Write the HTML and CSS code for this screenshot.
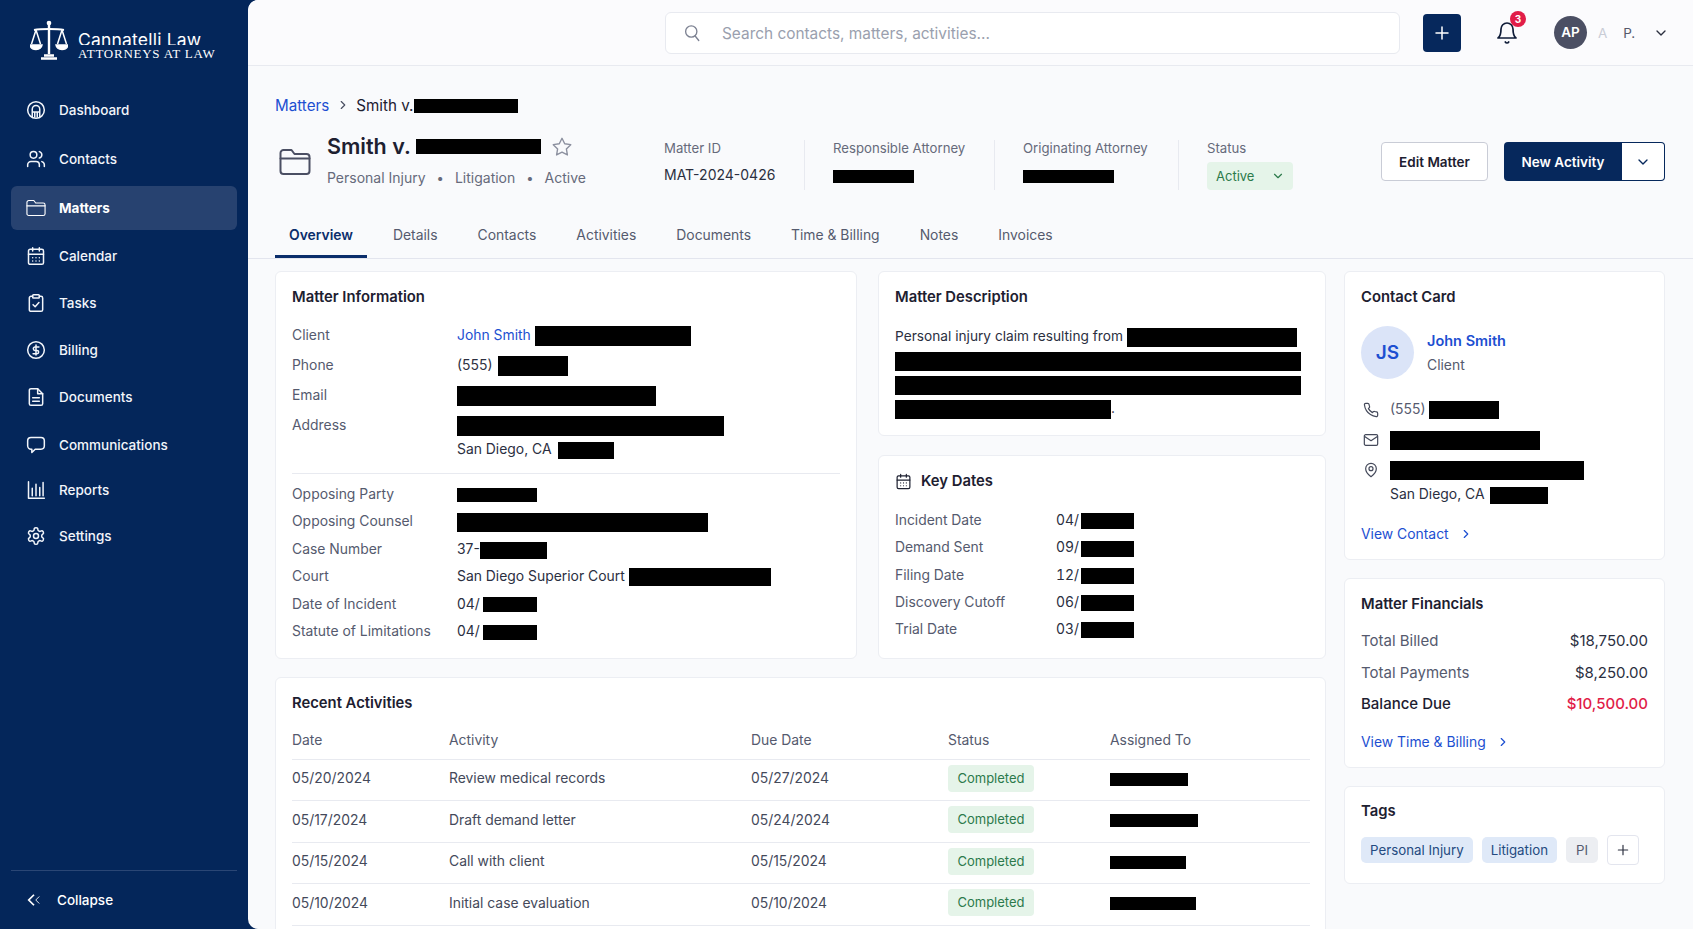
FILE: index.html
```html
<!DOCTYPE html>
<html lang="en">
<head>
    <meta charset="UTF-8">
    <meta name="viewport" content="width=device-width, initial-scale=1.0">
    <title>Smith v. - Matter Overview</title>
    <link rel="stylesheet" href="styles.css">
</head>
<body>
    <svg class="sprite" xmlns="http://www.w3.org/2000/svg">
        <symbol id="i-home" viewBox="0 0 24 24"><circle cx="12" cy="12" r="10"/><path d="M7.5 20.5V11a4.5 4.5 0 0 1 9 0v9.5M7.5 14.5h9M10.5 14.5v6M13.5 14.5v6"/></symbol>
        <symbol id="i-users" viewBox="0 0 24 24"><path d="M16 21v-2a4 4 0 0 0-4-4H6a4 4 0 0 0-4 4v2"/><circle cx="9" cy="7" r="4"/><path d="M22 21v-2a4 4 0 0 0-3-3.87M16 3.13a4 4 0 0 1 0 7.75"/></symbol>
        <symbol id="i-folder" viewBox="0 0 32 28"><path d="M1.5 9V5a3 3 0 0 1 3-3h8l3 4h12a3 3 0 0 1 3 3v14a3 3 0 0 1-3 3h-23a3 3 0 0 1-3-3V9z"/><path d="M1.500 10.500h29"/></symbol>
        <symbol id="i-calendar" viewBox="0 0 24 24"><rect x="3" y="4" width="18" height="18" rx="2"/><path d="M16 2v4M8 2v4M3 10h18M8 14h.01M12 14h.01M16 14h.01M8 18h.01M12 18h.01M16 18h.01"/></symbol>
        <symbol id="i-tasks" viewBox="0 0 24 24"><rect x="8" y="2" width="8" height="4" rx="1"/><path d="M16 4h2a2 2 0 0 1 2 2v14a2 2 0 0 1-2 2H6a2 2 0 0 1-2-2V6a2 2 0 0 1 2-2h2M8.5 14l2.5 2.5 4.5-5"/></symbol>
        <symbol id="i-dollar" viewBox="0 0 24 24"><circle cx="12" cy="12" r="10"/><path d="M15.5 8.5h-4.700a2 2 0 0 0 0 4h2.400a2 2 0 0 1 0 4H8.500M12 6v12"/></symbol>
        <symbol id="i-file" viewBox="0 0 24 24"><path d="M14 2H6a2 2 0 0 0-2 2v16a2 2 0 0 0 2 2h12a2 2 0 0 0 2-2V8z"/><path d="M14 2v6h6M8 13h8M8 17h8"/></symbol>
        <symbol id="i-chat" viewBox="0 0 24 24"><path d="M6 3h12a4 4 0 0 1 4 4v6a4 4 0 0 1-4 4h-7l-4 4v-4H6a4 4 0 0 1-4-4V7a4 4 0 0 1 4-4z"/></symbol>
        <symbol id="i-chart" viewBox="0 0 24 24"><path d="M3 2v20h19M7.5 10v9M12 5v14M16.5 9v10M20.5 3v16"/></symbol>
        <symbol id="i-gear" viewBox="0 0 24 24"><path d="M12.22 2h-.44a2 2 0 0 0-2 2v.18a2 2 0 0 1-1 1.73l-.43.25a2 2 0 0 1-2 0l-.15-.08a2 2 0 0 0-2.73.73l-.22.38a2 2 0 0 0 .73 2.73l.15.1a2 2 0 0 1 1 1.72v.51a2 2 0 0 1-1 1.74l-.15.09a2 2 0 0 0-.73 2.73l.22.38a2 2 0 0 0 2.73.73l.15-.08a2 2 0 0 1 2 0l.43.25a2 2 0 0 1 1 1.73V20a2 2 0 0 0 2 2h.44a2 2 0 0 0 2-2v-.18a2 2 0 0 1 1-1.73l.43-.25a2 2 0 0 1 2 0l.15.08a2 2 0 0 0 2.73-.73l.22-.39a2 2 0 0 0-.73-2.73l-.15-.08a2 2 0 0 1-1-1.74v-.5a2 2 0 0 1 1-1.74l.15-.09a2 2 0 0 0 .73-2.73l-.22-.38a2 2 0 0 0-2.73-.73l-.15.08a2 2 0 0 1-2 0l-.43-.25a2 2 0 0 1-1-1.73V4a2 2 0 0 0-2-2z"/><circle cx="12" cy="12" r="3"/></symbol>
        <symbol id="i-search" viewBox="0 0 24 24"><circle cx="11" cy="10" r="7.5"/><path d="M21 22l-4.800-6"/></symbol>
        <symbol id="i-bell" viewBox="0 0 24 24"><path d="M6 8a6 6 0 0 1 12 0c0 7 3 9 3 9H3s3-2 3-9"/><path d="M10.3 21a1.94 1.94 0 0 0 3.400 0"/></symbol>
        <symbol id="i-down" viewBox="0 0 24 24"><path d="M6 9l6 6 6-6"/></symbol>
        <symbol id="i-right" viewBox="0 0 24 24"><path d="M9 6l6 6-6 6"/></symbol>
        <symbol id="i-star" viewBox="0 0 24 24"><path d="M12 2.500l2.950 6 6.600.95-4.780 4.650 1.130 6.570L12 17.570 6.100 20.670l1.130-6.570L2.450 9.450l6.600-.95z"/></symbol>
        <symbol id="i-phone" viewBox="0 0 24 24"><path d="M22 16.92v3a2 2 0 0 1-2.180 2 19.79 19.79 0 0 1-8.630-3.070 19.5 19.5 0 0 1-6-6 19.79 19.79 0 0 1-3.070-8.670A2 2 0 0 1 4.110 2h3a2 2 0 0 1 2 1.720 12.84 12.84 0 0 0 .7 2.810 2 2 0 0 1-.45 2.110L8.090 9.910a16 16 0 0 0 6 6l1.270-1.270a2 2 0 0 1 2.110-.45 12.84 12.84 0 0 0 2.810.7A2 2 0 0 1 22 16.92z"/></symbol>
        <symbol id="i-mail" viewBox="0 0 24 24"><rect x="2" y="4" width="20" height="16" rx="2"/><path d="M3 7l9 6 9-6"/></symbol>
        <symbol id="i-pin" viewBox="0 0 24 24"><path d="M20 10c0 6-8 12-8 12s-8-6-8-12a8 8 0 0 1 16 0z"/><circle cx="12" cy="10" r="3"/></symbol>
        <symbol id="i-plus" viewBox="0 0 24 24"><path d="M12 4v16M4 12h16"/></symbol>
    </svg>

    <div class="app">
        <aside class="sidebar">
            <div class="logo">
                <svg class="logo-mark" viewBox="0 0 38 40" fill="none" stroke="#fff" stroke-width="1.5">
                    <circle cx="19" cy="3" r="1.6" fill="#fff"/>
                    <path d="M19 4v30" stroke-width="2.4"/>
                    <path d="M4 10c5-1 10-1 15-1s10 0 15 1" stroke-width="1.8"/>
                    <path d="M6 10L1.500 24M6 10l4.500 14M32 10l-4.500 14M32 10l4.500 14"/>
                    <path d="M0 25h12c-.5 3-3 4.500-6 4.500S.5 28 0 25zM26 25h12c-.5 3-3 4.500-6 4.500S26.500 28 26 25z" fill="#fff"/>
                    <path d="M11 38.5h16M14 35.5h10" stroke-width="2.4"/>
                </svg>
                <div class="logo-text">
                    <div class="logo-name"><span>Cannatelli Law</span></div>
                    <div class="logo-sub">ATTORNEYS AT LAW</div>
                </div>
            </div>
            <nav class="nav">
                <a class="nav-item"><svg class="icon"><use href="#i-home"/></svg>Dashboard</a>
                <a class="nav-item"><svg class="icon"><use href="#i-users"/></svg>Contacts</a>
                <a class="nav-item active"><svg class="icon"><use href="#i-folder"/></svg>Matters</a>
                <a class="nav-item"><svg class="icon"><use href="#i-calendar"/></svg>Calendar</a>
                <a class="nav-item"><svg class="icon"><use href="#i-tasks"/></svg>Tasks</a>
                <a class="nav-item"><svg class="icon"><use href="#i-dollar"/></svg>Billing</a>
                <a class="nav-item"><svg class="icon"><use href="#i-file"/></svg>Documents</a>
                <a class="nav-item"><svg class="icon"><use href="#i-chat"/></svg>Communications</a>
                <a class="nav-item"><svg class="icon"><use href="#i-chart"/></svg>Reports</a>
                <a class="nav-item"><svg class="icon"><use href="#i-gear"/></svg>Settings</a>
            </nav>
            <div class="collapse">
                <svg class="collapse-icon" viewBox="0 0 16 16" fill="none" stroke="#fff"><path d="M8 2L2 8l6 6" stroke-width="2"/><path d="M14 4l-4 4 4 4" stroke-width="1"/></svg>
                Collapse
            </div>
        </aside>

        <main class="main">
            <header class="topbar">
                <div class="search">
                    <svg class="icon icon-search"><use href="#i-search"/></svg>
                    <span>Search contacts, matters, activities...</span>
                </div>
                <button class="add-btn"><svg class="icon"><use href="#i-plus"/></svg></button>
                <div class="bell">
                    <svg class="icon"><use href="#i-bell"/></svg>
                    <span class="bell-count">3</span>
                </div>
                <div class="user">
                    <span class="avatar">AP</span>
                    <span class="user-name"><span class="faint">A</span> P.</span>
                    <svg class="icon icon-chevron"><use href="#i-down"/></svg>
                </div>
            </header>

            <section class="page-head">
                <div class="breadcrumb">
                    <a class="link">Matters</a>
                    <svg class="icon icon-sep"><use href="#i-right"/></svg>
                    <span>Smith v.<i class="redact w-104 h-14"></i></span>
                </div>
                <div class="matter-head">
                    <div class="matter-title-block">
                        <svg class="icon icon-folder"><use href="#i-folder"/></svg>
                        <div>
                            <h1>Smith v. <i class="redact w-125 h-15"></i><svg class="icon icon-star"><use href="#i-star"/></svg></h1>
                            <div class="matter-sub">Personal Injury<b>•</b>Litigation<b>•</b>Active</div>
                        </div>
                    </div>
                    <div class="meta meta-id"><span class="meta-label">Matter ID</span><span class="meta-value">MAT-2024-0426</span></div>
                    <div class="meta meta-resp"><span class="meta-label">Responsible Attorney</span><span class="meta-value"><i class="redact w-81 h-13"></i></span></div>
                    <div class="meta meta-orig"><span class="meta-label">Originating Attorney</span><span class="meta-value"><i class="redact w-91 h-13"></i></span></div>
                    <div class="meta meta-status"><span class="meta-label">Status</span><span class="status-pill">Active<svg class="icon"><use href="#i-down"/></svg></span></div>
                    <div class="actions">
                        <button class="btn-outline">Edit Matter</button>
                        <div class="btn-split">
                            <button class="btn-primary">New Activity</button>
                            <button class="btn-caret"><svg class="icon"><use href="#i-down"/></svg></button>
                        </div>
                    </div>
                </div>
            </section>

            <nav class="tabs">
                <a class="tab active">Overview</a>
                <a class="tab">Details</a>
                <a class="tab">Contacts</a>
                <a class="tab">Activities</a>
                <a class="tab">Documents</a>
                <a class="tab">Time &amp; Billing</a>
                <a class="tab">Notes</a>
                <a class="tab">Invoices</a>
            </nav>

            <div class="overview">
                <div class="overview-left">
                    <section class="card card-info">
                        <h2>Matter Information</h2>
                        <div class="info-row"><span>Client</span><div><a class="link">John Smith</a> <i class="redact w-156 h-20"></i></div></div>
                        <div class="info-row"><span>Phone</span><div>(555) <i class="redact ml-2 w-70 h-20"></i></div></div>
                        <div class="info-row"><span>Email</span><div><i class="redact w-199 h-20"></i></div></div>
                        <div class="info-row info-address"><span>Address</span><div><i class="redact w-267 h-20"></i><br>San Diego, CA <i class="redact ml-3 w-56 h-17"></i></div></div>
                        <hr class="divider">
                        <div class="info-row info-tight"><span>Opposing Party</span><div><i class="redact w-80 h-14"></i></div></div>
                        <div class="info-row info-tight"><span>Opposing Counsel</span><div><i class="redact w-251 h-19"></i></div></div>
                        <div class="info-row info-tight"><span>Case Number</span><div>37-<i class="redact w-67 h-17"></i></div></div>
                        <div class="info-row info-tight"><span>Court</span><div>San Diego Superior Court <i class="redact w-142 h-18"></i></div></div>
                        <div class="info-row info-tight"><span>Date of Incident</span><div>04/<i class="redact ml-3 w-54 h-15"></i></div></div>
                        <div class="info-row info-tight"><span>Statute of Limitations</span><div>04/<i class="redact ml-3 w-54 h-15"></i></div></div>
                    </section>

                    <div class="middle-stack">
                        <section class="card card-desc">
                            <h2>Matter Description</h2>
                            <p>Personal injury claim resulting from <i class="redact w-170 h-19"></i><br>
                            <i class="redact w-406 h-19"></i><br>
                            <i class="redact w-406 h-19"></i><br>
                            <i class="redact w-216 h-19"></i>.</p>
                        </section>
                        <section class="card card-dates">
                            <h2 class="title-icon"><svg class="icon"><use href="#i-calendar"/></svg>Key Dates</h2>
                            <div class="date-row"><span>Incident Date</span><div>04/<i class="redact ml-2 w-53 h-16"></i></div></div>
                            <div class="date-row"><span>Demand Sent</span><div>09/<i class="redact ml-2 w-53 h-16"></i></div></div>
                            <div class="date-row"><span>Filing Date</span><div>12/<i class="redact ml-2 w-53 h-16"></i></div></div>
                            <div class="date-row"><span>Discovery Cutoff</span><div>06/<i class="redact ml-2 w-53 h-16"></i></div></div>
                            <div class="date-row"><span>Trial Date</span><div>03/<i class="redact ml-2 w-53 h-16"></i></div></div>
                        </section>
                    </div>

                    <section class="card card-activities">
                        <h2>Recent Activities</h2>
                        <table>
                            <thead>
                                <tr><th>Date</th><th>Activity</th><th>Due Date</th><th>Status</th><th>Assigned To</th></tr>
                            </thead>
                            <tbody>
                                <tr><td>05/20/2024</td><td>Review medical records</td><td>05/27/2024</td><td><span class="badge">Completed</span></td><td><i class="redact w-78 h-13"></i></td></tr>
                                <tr><td>05/17/2024</td><td>Draft demand letter</td><td>05/24/2024</td><td><span class="badge">Completed</span></td><td><i class="redact w-88 h-13"></i></td></tr>
                                <tr><td>05/15/2024</td><td>Call with client</td><td>05/15/2024</td><td><span class="badge">Completed</span></td><td><i class="redact w-76 h-13"></i></td></tr>
                                <tr><td>05/10/2024</td><td>Initial case evaluation</td><td>05/10/2024</td><td><span class="badge">Completed</span></td><td><i class="redact w-86 h-13"></i></td></tr>
                            </tbody>
                        </table>
                    </section>
                </div>

                <div class="overview-right">
                    <section class="card card-contact">
                        <h2>Contact Card</h2>
                        <div class="contact-person">
                            <span class="contact-avatar">JS</span>
                            <div>
                                <a class="link contact-name">John Smith</a>
                                <div class="contact-role">Client</div>
                            </div>
                        </div>
                        <div class="contact-row"><svg class="icon"><use href="#i-phone"/></svg><span>(555) <i class="redact w-70 h-18"></i></span></div>
                        <div class="contact-row"><svg class="icon"><use href="#i-mail"/></svg><span><i class="redact w-150 h-19"></i></span></div>
                        <div class="contact-row"><svg class="icon"><use href="#i-pin"/></svg><span><i class="redact w-194 h-19"></i></span></div>
                        <div class="contact-city">San Diego, CA <i class="redact ml-2 w-58 h-17"></i></div>
                        <a class="link view-link">View Contact<svg class="icon"><use href="#i-right"/></svg></a>
                    </section>

                    <section class="card card-fin">
                        <h2>Matter Financials</h2>
                        <div class="fin-row"><span>Total Billed</span><span class="fin-amount">$18,750.00</span></div>
                        <div class="fin-row"><span>Total Payments</span><span class="fin-amount">$8,250.00</span></div>
                        <div class="fin-row fin-due"><span>Balance Due</span><span class="fin-red">$10,500.00</span></div>
                        <a class="link view-link">View Time &amp; Billing<svg class="icon"><use href="#i-right"/></svg></a>
                    </section>

                    <section class="card card-tags">
                        <h2>Tags</h2>
                        <div class="tag-list">
                            <span class="tag">Personal Injury</span>
                            <span class="tag">Litigation</span>
                            <span class="tag tag-grey">PI</span>
                            <button class="tag-add"><svg class="icon"><use href="#i-plus"/></svg></button>
                        </div>
                    </section>
                </div>
            </div>
        </main>
    </div>
</body>
</html>
```

FILE: styles.css
```css
* {
    box-sizing: border-box;
}
html, body {
    height: 100%;
}
body {
    margin: 0;
    overflow: hidden;
    background-color: #04265a;
    color: #2b2f3f;
    font-family: Inter, "Noto Sans", sans-serif;
    font-size: 13.9px;
}
.sprite {
    display: none;
}
.icon {
    fill: none;
    stroke: currentColor;
    stroke-width: 2;
    stroke-linecap: round;
    stroke-linejoin: round;
    flex-shrink: 0;
}
.link {
    color: #1d4fd1;
    text-decoration: none;
}
h1, h2, p {
    margin: 0;
}
button {
    font-family: inherit;
    cursor: pointer;
}
.redact {
    display: inline-block;
    background-color: #000;
    vertical-align: middle;
}
.ml-2 { margin-left: 2px; }
.ml-3 { margin-left: 3px; }
.w-53 { width: 53px; }
.w-54 { width: 54px; }
.w-56 { width: 56px; }
.w-58 { width: 58px; }
.w-67 { width: 67px; }
.w-70 { width: 70px; }
.w-76 { width: 76px; }
.w-78 { width: 78px; }
.w-80 { width: 80px; }
.w-81 { width: 81px; }
.w-86 { width: 86px; }
.w-88 { width: 88px; }
.w-91 { width: 91px; }
.w-104 { width: 104px; }
.w-125 { width: 125px; }
.w-142 { width: 142px; }
.w-150 { width: 150px; }
.w-156 { width: 156px; }
.w-170 { width: 170px; }
.w-194 { width: 194px; }
.w-199 { width: 199px; }
.w-216 { width: 216px; }
.w-251 { width: 251px; }
.w-267 { width: 267px; }
.w-406 { width: 406px; }
.h-13 { height: 13px; }
.h-14 { height: 14px; }
.h-15 { height: 15px; }
.h-16 { height: 16px; }
.h-17 { height: 17px; }
.h-18 { height: 18px; }
.h-19 { height: 19px; }
.h-20 { height: 20px; }

.app {
    display: flex;
    height: 100%;
}

/* sidebar */
.sidebar {
    width: 248px;
    flex-shrink: 0;
    padding: 20px 11px 0;
    display: flex;
    flex-direction: column;
    color: #fff;
}
.logo {
    display: flex;
    align-items: flex-start;
    gap: 10px;
    padding-left: 19px;
    height: 64px;
}
.logo-mark {
    width: 38px;
    height: 40px;
}
.logo-text {
    padding-top: 10px;
}
.logo-name {
    height: 15px;
    overflow: hidden;
    font-size: 17.5px;
    line-height: 20px;
    letter-spacing: 0.2px;
}
.logo-sub {
    font-family: "Liberation Serif", serif;
    font-size: 13px;
    line-height: 13px;
    letter-spacing: 0.75px;
    margin-top: 2px;
}
.nav {
    display: flex;
    flex-direction: column;
    margin-top: 4px;
}
.nav-item {
    display: flex;
    align-items: center;
    gap: 13px;
    height: 44px;
    padding-left: 15px;
    margin-bottom: 4.5px;
    border-radius: 6px;
    color: #f2f5fa;
    font-size: 13.5px;
    font-weight: 500;
}
.nav-item:nth-child(n+4) {
    margin-bottom: 3.3px;
}
.nav-item:nth-child(n+8) {
    margin-bottom: 1.5px;
}
.nav-item .icon {
    width: 20px;
    height: 20px;
    stroke-width: 1.8;
}
.nav-item.active {
    background-color: #274270;
    font-weight: 700;
    color: #fff;
    margin-top: 1px;
    margin-bottom: 3.5px;
}
.collapse {
    margin-top: auto;
    height: 59px;
    border-top: 1px solid #2a4675;
    display: flex;
    align-items: center;
    gap: 16px;
    padding-left: 16px;
    font-size: 13.5px;
    font-weight: 500;
}
.collapse-icon {
    width: 14px;
    height: 16px;
}

/* main */
.main {
    flex: 1;
    min-width: 0;
    background-color: #f9fafc;
    border-radius: 10px 0 0 10px;
    overflow: hidden;
}
.topbar {
    height: 66px;
    background-color: #fbfbfd;
    border-bottom: 1px solid #e8eaf0;
    display: flex;
    align-items: center;
    padding-left: 417px;
}
.search {
    width: 735px;
    height: 42px;
    background-color: #fff;
    border: 1px solid #e8eaf0;
    border-radius: 6px;
    display: flex;
    align-items: center;
    gap: 21px;
    padding: 1px 0 0 17px;
    color: #9a9fae;
    font-size: 15.4px;
}
.icon-search {
    width: 18px;
    height: 18px;
    color: #7d8292;
    stroke-width: 1.8;
}
.add-btn {
    width: 38px;
    height: 38px;
    margin-left: 23px;
    padding: 0;
    border: none;
    border-radius: 4px;
    background-color: #06285c;
    color: #fff;
    display: flex;
    align-items: center;
    justify-content: center;
}
.add-btn .icon {
    width: 18px;
    height: 18px;
}
.bell {
    position: relative;
    margin-left: 34px;
    width: 24px;
    height: 24px;
    color: #0f1c38;
}
.bell .icon {
    width: 24px;
    height: 24px;
    stroke-width: 1.7;
}
.bell-count {
    position: absolute;
    top: -10px;
    left: 15px;
    width: 16px;
    height: 16px;
    border-radius: 50%;
    background-color: #e11d48;
    color: #fff;
    font-size: 10px;
    font-weight: 700;
    line-height: 16px;
    text-align: center;
}
.user {
    display: flex;
    align-items: center;
    margin-left: 35px;
}
.avatar {
    width: 33px;
    height: 33px;
    border-radius: 50%;
    background-color: #4b4f63;
    color: #fff;
    font-size: 13.5px;
    font-weight: 600;
    line-height: 33px;
    text-align: center;
}
.user-name {
    margin-left: 11px;
    width: 55px;
    color: #55596b;
    font-size: 13.5px;
    word-spacing: 12px;
}
.faint {
    color: #c9ccd6;
}
.icon-chevron {
    width: 16px;
    height: 16px;
    color: #2b2f3f;
}

/* matter header */
.page-head {
    padding: 29px 27px 0;
}
.breadcrumb {
    display: flex;
    align-items: center;
    height: 20px;
    font-size: 15.2px;
    color: #1d2030;
}
.breadcrumb .redact {
    margin-left: 1px;
}
.icon-sep {
    width: 14px;
    height: 14px;
    margin: 0 6px 0 7px;
    color: #4b4f63;
}
.matter-head {
    display: flex;
    margin-top: 17px;
    height: 68px;
}
.matter-title-block {
    width: 389px;
    display: flex;
    gap: 16px;
}
.icon-folder {
    width: 32px;
    height: 28px;
    margin: 16px 0 0 4px;
    color: #4b4f63;
}
h1 {
    display: flex;
    align-items: center;
    font-size: 21.5px;
    font-weight: 600;
    line-height: 30px;
    color: #1d2030;
    margin-top: -1px;
    white-space: pre;
}
.icon-star {
    width: 22px;
    height: 22px;
    margin: 1px 0 0 10px;
    color: #8c909f;
    stroke-width: 1.5;
}
.matter-sub {
    margin-top: 7px;
    color: #666a7b;
    font-size: 14px;
    line-height: 20px;
}
.matter-sub b {
    margin: 0 11px;
    font-weight: 400;
    font-size: 13px;
}
.meta {
    display: flex;
    flex-direction: column;
    height: 50px;
    margin-top: 8px;
    border-right: 1px solid #e8eaf0;
}
.meta-id { width: 141px; }
.meta-resp { width: 190px; padding-left: 28px; }
.meta-orig { width: 184px; padding-left: 28px; }
.meta-status { width: auto; padding-left: 28px; border-right: none; }
.meta-label {
    color: #666a7b;
    font-size: 13.2px;
    line-height: 16px;
}
.meta-value {
    margin-top: 10px;
    color: #2b2f3f;
    font-size: 14px;
    line-height: 18px;
}
.status-pill {
    display: flex;
    align-items: center;
    gap: 17px;
    width: 86px;
    height: 30px;
    margin-top: 6px;
    padding-left: 9px;
    border-radius: 4px;
    background-color: #e5f4e9;
    color: #2c7a4b;
    font-size: 13px;
}
.status-pill .icon {
    width: 14px;
    height: 14px;
}
.actions {
    margin-left: auto;
    margin-right: 1px;
    display: flex;
    gap: 16px;
    margin-top: 10px;
    height: 39px;
}
.btn-outline {
    width: 107px;
    border: 1px solid #c9ccd6;
    border-radius: 4px;
    background-color: #fff;
    color: #1d2030;
    font-size: 13.5px;
    font-weight: 600;
}
.btn-split {
    display: flex;
    width: 161px;
}
.btn-primary {
    width: 118px;
    border: none;
    border-radius: 4px 0 0 4px;
    background-color: #06285c;
    color: #fff;
    font-size: 13.5px;
    font-weight: 600;
}
.btn-caret {
    flex: 1;
    border: 1px solid #06285c;
    border-left: none;
    border-radius: 0 4px 4px 0;
    background-color: #fff;
    color: #06285c;
    display: flex;
    align-items: center;
    justify-content: center;
    padding: 0;
}
.btn-caret .icon {
    width: 16px;
    height: 16px;
}

/* tabs */
.tabs {
    display: flex;
    gap: 12px;
    height: 45px;
    margin-top: 14px;
    padding: 0 27px;
    border-bottom: 1px solid #e3e5ee;
}
.tab {
    display: flex;
    align-items: center;
    height: 44px;
    padding: 0 14px 2px;
    color: #555a6e;
    font-size: 13.9px;
}
.tab.active {
    color: #0b2e6b;
    font-weight: 600;
    border-bottom: 3px solid #0b2e6b;
    padding-top: 1px;
    padding-bottom: 0;
}

/* cards */
.overview {
    display: flex;
    gap: 18px;
    padding: 12px 27px 0;
}
.overview-left {
    width: 1051px;
    display: grid;
    grid-template-columns: 582px 448px;
    grid-template-rows: 388px auto;
    column-gap: 21px;
    row-gap: 18px;
}
.overview-right {
    width: 321px;
    display: flex;
    flex-direction: column;
    gap: 18px;
}
.card {
    background-color: #fff;
    border: 1px solid #eceef3;
    border-radius: 6px;
    padding: 15px 16px 15px;
}
h2 {
    font-size: 14.8px;
    font-weight: 600;
    line-height: 20px;
    color: #1d2030;
    margin-bottom: 13px;
}
.info-row {
    display: flex;
    line-height: 24px;
    padding: 3px 0;
}
.info-row > span {
    width: 165px;
    flex-shrink: 0;
    color: #555a6e;
}
.info-address {
    padding-bottom: 0;
}
.info-tight {
    padding: 0;
    line-height: 27.4px;
}
.divider {
    border: none;
    border-top: 1px solid #e8eaf0;
    margin: 12px 0 7px;
}
.middle-stack {
    display: flex;
    flex-direction: column;
    gap: 19px;
}
.card-desc {
    height: 166px;
}
.card-desc h2 {
    margin-bottom: 17px;
}
.card-desc p {
    font-size: 13.7px;
    line-height: 24px;
}
.card-dates {
    flex: 1;
}
.card-dates h2 {
    margin-bottom: 16px;
}
.title-icon {
    display: flex;
    align-items: center;
    gap: 9px;
}
.title-icon .icon {
    width: 17px;
    height: 17px;
    stroke-width: 1.7;
}
.date-row {
    display: flex;
    line-height: 27.3px;
    font-variant-numeric: tabular-nums;
}
.date-row > span {
    width: 161px;
    color: #555a6e;
}
.card-activities {
    grid-column: 1 / 3;
    height: 300px;
}
.card-activities h2 {
    margin-bottom: 13px;
}
table {
    width: 1018px;
    border-collapse: collapse;
    table-layout: fixed;
}
th {
    width: 157px;
    height: 33px;
    font-weight: 400;
    text-align: left;
    color: #555a6e;
    border-bottom: 1px solid #e8eaf0;
    padding: 0 0 4px;
}
th:nth-child(2) { width: 302px; }
th:nth-child(3) { width: 197px; }
th:nth-child(4) { width: 162px; }
th:nth-child(5) { width: 200px; }
td {
    height: 41.5px;
    padding: 0 0 3px;
    color: #44495a;
    border-bottom: 1px solid #e8eaf0;
}
.badge {
    display: inline-block;
    width: 86px;
    height: 27px;
    border-radius: 4px;
    background-color: #e5f4e9;
    color: #2c7a4b;
    font-size: 13px;
    line-height: 27px;
    text-align: center;
}
.contact-person {
    display: flex;
    align-items: center;
    gap: 13px;
    margin-top: 19px;
    height: 53px;
}
.contact-avatar {
    width: 53px;
    height: 53px;
    border-radius: 50%;
    background-color: #dbe4f8;
    color: #1d4fd1;
    font-size: 19px;
    font-weight: 600;
    line-height: 53px;
    text-align: center;
}
.contact-name {
    display: block;
    font-size: 14.5px;
    font-weight: 600;
    line-height: 20px;
}
.contact-role {
    margin-top: 5px;
    color: #555a6e;
    line-height: 18px;
}
.contact-row {
    display: flex;
    align-items: center;
    gap: 11px;
    height: 30px;
    padding-left: 2px;
    color: #555a6e;
}
.contact-person + .contact-row {
    margin-top: 16px;
}
.contact-row .icon {
    width: 16px;
    height: 16px;
    color: #44495a;
    stroke-width: 1.8;
}
.contact-city {
    padding-left: 29px;
    margin-top: -3px;
    line-height: 24px;
}
.view-link {
    display: flex;
    align-items: center;
    gap: 10px;
    margin-top: 18px;
    line-height: 20px;
}
.view-link .icon {
    width: 14px;
    height: 14px;
}
.card-fin h2 {
    margin-bottom: 11px;
}
.card-fin .view-link {
    margin-top: 12px;
}
.fin-row {
    display: flex;
    justify-content: space-between;
    align-items: center;
    height: 31.5px;
    font-size: 15px;
    color: #555a6e;
}
.fin-amount {
    color: #2b2f3f;
}
.fin-due {
    color: #1d2030;
    font-weight: 500;
}
.fin-red {
    color: #e11d48;
}
.card-tags {
    padding-top: 14px;
    padding-bottom: 18px;
}
.card-tags h2 {
    margin-bottom: 14px;
}
.tag-list {
    display: flex;
    align-items: center;
    gap: 9px;
}
.tag {
    height: 26px;
    padding: 0 9px;
    border-radius: 5px;
    background-color: #dfe9f8;
    color: #244a80;
    font-size: 13.3px;
    line-height: 26px;
}
.tag-grey {
    background-color: #eceef2;
    color: #555a6e;
    padding: 0 10px;
}
.tag-add {
    width: 32px;
    height: 30px;
    padding: 0;
    border: 1px solid #e3e5ee;
    border-radius: 4px;
    background-color: #fff;
    color: #2b2f3f;
    display: flex;
    align-items: center;
    justify-content: center;
}
.tag-add .icon {
    width: 14px;
    height: 14px;
}
```
